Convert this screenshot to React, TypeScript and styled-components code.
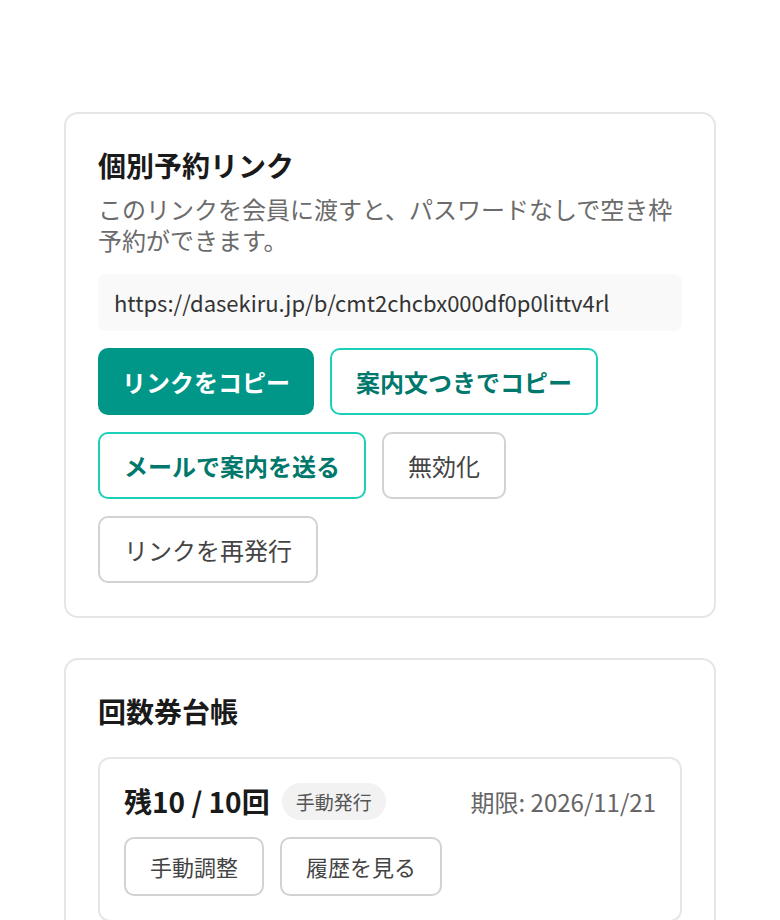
import styled, { createGlobalStyle } from "styled-components";

const GlobalStyle = createGlobalStyle`
  body {
    margin: 0;
    background: #ffffff;
    font-family: "Noto Sans CJK JP", "Noto Sans", sans-serif;
    color: #1a1a1a;
  }
  * {
    box-sizing: border-box;
  }
`;

type Variant = "primary" | "accent" | "plain";

const BOOKING_URL = "https://dasekiru.jp/b/cmt2chcbx000df0p0littv4rl";

export default function App() {
  return (
    <Page>
      <GlobalStyle />
      <Card>
        <Title>個別予約リンク</Title>
        <Description>
          このリンクを会員に渡すと、パスワードなしで空き枠予約ができます。
        </Description>
        <UrlBox>{BOOKING_URL}</UrlBox>
        <ButtonRow>
          <Button $variant="primary">リンクをコピー</Button>
          <Button $variant="accent">案内文つきでコピー</Button>
          <Button $variant="accent">メールで案内を送る</Button>
          <Button $variant="plain">無効化</Button>
          <Button $variant="plain">リンクを再発行</Button>
        </ButtonRow>
      </Card>

      <Card>
        <Title>回数券台帳</Title>
        <Ticket>
          <TicketHead>
            <Remaining>残10 / 10回</Remaining>
            <Badge>手動発行</Badge>
            <Expiry>期限: 2026/11/21</Expiry>
          </TicketHead>
          <SmallRow>
            <SmallButton>手動調整</SmallButton>
            <SmallButton>履歴を見る</SmallButton>
          </SmallRow>
        </Ticket>
      </Card>
    </Page>
  );
}

const Page = styled.main`
  display: flex;
  flex-direction: column;
  gap: 40px;
  padding: 112px 64px 40px;
`;

const Card = styled.section`
  border: 2px solid #e6e6e6;
  border-radius: 14px;
  padding: 32px 32px 33px;
  background: #fff;
`;

const Title = styled.h2`
  margin: 0;
  font-size: 28px;
  line-height: 1.4;
  font-weight: 700;
  color: #1a1a1a;
`;

const Description = styled.p`
  margin: 8px 0 0;
  font-size: 24px;
  line-height: 1.3;
  color: #6b6b6b;
`;

const UrlBox = styled.div`
  margin-top: 18px;
  padding: 12px 16px;
  border-radius: 8px;
  background: #f9f9f9;
  font-size: 22px;
  line-height: 33px;
  color: #333;
`;

const ButtonRow = styled.div`
  display: flex;
  flex-wrap: wrap;
  gap: 17px 16px;
  margin-top: 17px;
`;

const variants: Record<Variant, string> = {
  primary: `
    background: #009688;
    border: none;
    padding: 18px 24px;
    color: #ffffff;
    font-weight: 700;
  `,
  accent: `
    background: #ffffff;
    border-color: #1ccfb9;
    color: #00786c;
    font-weight: 700;
  `,
  plain: `
    background: #ffffff;
    border-color: #d2d2d2;
    color: #444;
    font-weight: 400;
  `,
};

const Button = styled.button<{ $variant: Variant }>`
  font-family: inherit;
  font-size: 24px;
  line-height: 31px;
  padding: 16px 24px;
  border: 2px solid;
  border-radius: 10px;
  cursor: pointer;
  ${({ $variant }) => variants[$variant]}
`;

const Ticket = styled.div`
  margin-top: 26px;
  border: 2px solid #e6e6e6;
  border-radius: 12px;
  padding: 23px 24px 24px;
`;

const TicketHead = styled.div`
  display: flex;
  align-items: center;
  gap: 12px;
`;

const Remaining = styled.span`
  font-size: 28px;
  font-weight: 700;
  line-height: 1.4;
  color: #1a1a1a;
`;

const Badge = styled.span`
  padding: 5px 14px;
  border-radius: 999px;
  background: #f2f2f2;
  font-size: 19px;
  line-height: 27px;
  color: #555;
`;

const Expiry = styled.span`
  margin-left: auto;
  font-size: 24px;
  color: #666;
`;

const SmallRow = styled.div`
  display: flex;
  gap: 16px;
  margin-top: 16px;
`;

const SmallButton = styled.button`
  font-family: inherit;
  font-size: 22px;
  line-height: 29px;
  padding: 13px 24px;
  border: 2px solid #d2d2d2;
  border-radius: 10px;
  background: #fff;
  color: #444;
  cursor: pointer;
`;
